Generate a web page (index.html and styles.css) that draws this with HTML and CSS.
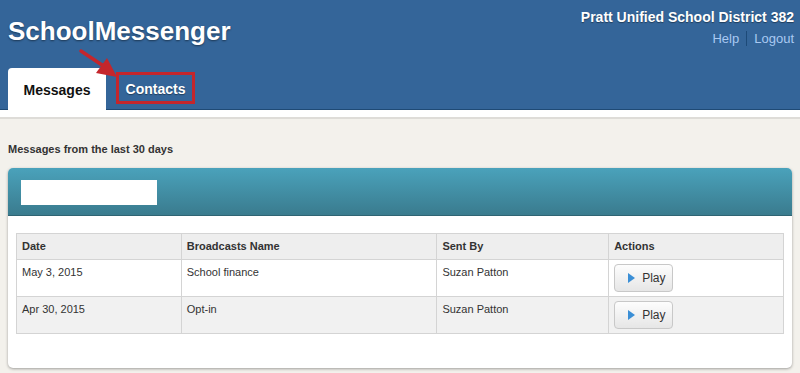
FILE: index.html
```html
<!DOCTYPE html>
<html>
<head>
<meta charset="utf-8">
<link rel="stylesheet" href="styles.css">
</head>
<body>
<div class="header">
  <div class="top">
    <div class="brand">SchoolMessenger</div>
    <div class="account">
      <div class="district">Pratt Unified School District 382</div>
      <div class="links"><a>Help</a><span class="sep"></span><a>Logout</a></div>
    </div>
  </div>
  <div class="tabs">
    <div class="tab active">Messages</div>
    <div class="tab highlight">Contacts</div>
  </div>
  <svg class="arrow" width="64" height="42" viewBox="0 0 64 42">
    <line x1="22" y1="6" x2="46" y2="22" stroke="#c4262c" stroke-width="3.5" stroke-linecap="round"/>
    <polygon points="58,32 37,28 48,13" fill="#c4262c"/>
  </svg>
</div>
<div class="strip"></div>
<div class="content">
  <div class="caption">Messages from the last 30 days</div>
  <div class="panel">
    <div class="panel-head"><div class="blank"></div></div>
    <div class="panel-body">
      <table>
        <thead>
          <tr><th class="c1">Date</th><th class="c2">Broadcasts Name</th><th class="c3">Sent By</th><th class="c4">Actions</th></tr>
        </thead>
        <tbody>
          <tr><td>May 3, 2015</td><td>School finance</td><td>Suzan Patton</td><td><button class="play"><span class="tri"></span>Play</button></td></tr>
          <tr class="alt"><td>Apr 30, 2015</td><td>Opt-in</td><td>Suzan Patton</td><td><button class="play"><span class="tri"></span>Play</button></td></tr>
        </tbody>
      </table>
    </div>
  </div>
</div>
</body>
</html>
```
FILE: styles.css
```css
* { box-sizing: border-box; }
html, body { margin: 0; padding: 0; }
body {
  font-family: "Liberation Sans", Arial, sans-serif;
  background: #f3f1ec;
  width: 800px;
  height: 373px;
  overflow: hidden;
}
.header {
  position: relative;
  background: #346599;
  height: 110px;
  border-bottom: 1px solid #1f4a75;
  padding: 0 6px 0 8px;
  display: flex;
  flex-direction: column;
}
.top {
  display: flex;
  justify-content: space-between;
  align-items: flex-start;
  height: 68px;
}
.brand {
  color: #fff;
  font-weight: bold;
  font-size: 26px;
  margin-top: 16px;
  text-shadow: 0 1px 2px rgba(0,0,0,0.45);
}
.account {
  display: flex;
  flex-direction: column;
  align-items: flex-end;
  margin-top: 9px;
}
.district {
  color: #fff;
  font-weight: bold;
  font-size: 14px;
  text-shadow: 0 1px 1px rgba(0,0,0,0.4);
}
.links {
  display: flex;
  align-items: center;
  margin-top: 6px;
  font-size: 13px;
  color: #a9c9f2;
}
.links .sep {
  width: 1px;
  height: 15px;
  background: #1d4a78;
  margin: 0 7px;
}
.tabs {
  display: flex;
  align-items: flex-end;
  height: 41px;
}
.tab {
  font-weight: bold;
  font-size: 14px;
  height: 41px;
  display: flex;
  align-items: center;
  justify-content: center;
}
.tab.active {
  width: 98px;
  background: #fff;
  color: #111;
  border-radius: 4px 4px 0 0;
  height: 42px;
  margin-bottom: -1px;
  padding-top: 1px;
}
.tab.highlight {
  color: #fff;
  margin-left: 10px;
  margin-bottom: 5px;
  height: 32px;
  width: 79px;
  border: 3px solid #c4262c;
  padding-top: 1px;
  text-shadow: 0 1px 1px rgba(0,0,0,0.4);
}
.arrow {
  position: absolute;
  left: 59px;
  top: 45px;
}
.strip {
  height: 9px;
  background: #fff;
  border-bottom: 2px solid #dedcd8;
}
.content {
  padding: 0 8px;
}
.caption {
  font-size: 11px;
  font-weight: bold;
  color: #333;
  margin-top: 24px;
  height: 25px;
}
.panel {
  background: #fff;
  border-radius: 5px;
  box-shadow: 0 1px 3px rgba(0,0,0,0.35);
  overflow: hidden;
  height: 200px;
}
.panel-head {
  height: 48px;
  background: linear-gradient(#4aa2bb, #3a7b8e);
  border-bottom: 1px solid #2f6473;
  padding: 12px 0 0 13px;
}
.blank {
  width: 136px;
  height: 25px;
  background: #fff;
}
.panel-body {
  padding: 17px 8px 0 8px;
}
table {
  width: 768px;
  border-collapse: collapse;
  font-size: 11px;
  color: #333;
}
th, td {
  border: 1px solid #d4d4d4;
  text-align: left;
  vertical-align: top;
  padding: 6px 5px;
}
th {
  background: #eeeeee;
  font-weight: bold;
  height: 26px;
}
td { height: 37px; }
tr.alt td { background: #f1f1f1; }
.c1 { width: 165px; }
.c2 { width: 256px; }
.c3 { width: 172px; }
.c4 { width: 175px; }
td:last-child { padding: 4px 4px 4px 5px; }
.play {
  width: 59px;
  height: 28px;
  border: 1px solid #c8c8c8;
  border-radius: 4px;
  background: linear-gradient(#fdfdfd, #e6e6e6);
  font-family: "Liberation Sans", Arial, sans-serif;
  font-size: 12px;
  color: #333;
  display: flex;
  align-items: center;
  padding: 0 0 0 13px;
}
.tri {
  width: 0;
  height: 0;
  border-top: 5px solid transparent;
  border-bottom: 5px solid transparent;
  border-left: 7px solid #3b8fd6;
  margin-right: 7px;
}
```
